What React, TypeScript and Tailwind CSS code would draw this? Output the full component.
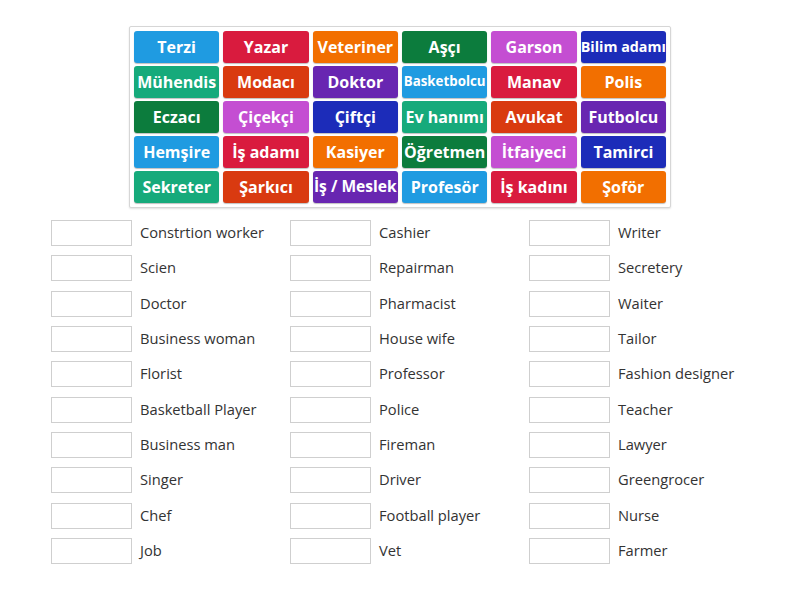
import React from "react";

type Tile = { label: string; color: string; size?: string };

const COLORS = [
  "bg-[#1f9be1]",
  "bg-[#d91b3e]",
  "bg-[#f26f00]",
  "bg-[#0c7c3d]",
  "bg-[#c44ed2]",
  "bg-[#1c2cb9]",
  "bg-[#16aa7b]",
  "bg-[#d93a10]",
  "bg-[#6826b1]",
];

const LABELS: { label: string; size?: string }[] = [
  { label: "Terzi" },
  { label: "Yazar" },
  { label: "Veteriner" },
  { label: "Aşçı" },
  { label: "Garson" },
  { label: "Bilim adamı", size: "text-[14.3px]" },
  { label: "Mühendis" },
  { label: "Modacı" },
  { label: "Doktor" },
  { label: "Basketbolcu", size: "text-[13.3px]" },
  { label: "Manav" },
  { label: "Polis" },
  { label: "Eczacı" },
  { label: "Çiçekçi" },
  { label: "Çiftçi" },
  { label: "Ev hanımı" },
  { label: "Avukat" },
  { label: "Futbolcu" },
  { label: "Hemşire" },
  { label: "İş adamı" },
  { label: "Kasiyer" },
  { label: "Öğretmen" },
  { label: "İtfaiyeci" },
  { label: "Tamirci" },
  { label: "Sekreter" },
  { label: "Şarkıcı" },
  { label: "İş / Meslek", size: "text-[15.6px]" },
  { label: "Profesör" },
  { label: "İş kadını" },
  { label: "Şoför" },
];

const TILES: Tile[] = LABELS.map((t, i) => ({ ...t, color: COLORS[i % COLORS.length] }));

const COLUMNS: string[][] = [
  ["Constrtion worker", "Scien", "Doctor", "Business woman", "Florist", "Basketball Player", "Business man", "Singer", "Chef", "Job"],
  ["Cashier", "Repairman", "Pharmacist", "House wife", "Professor", "Police", "Fireman", "Driver", "Football player", "Vet"],
  ["Writer", "Secretery", "Waiter", "Tailor", "Fashion designer", "Teacher", "Lawyer", "Greengrocer", "Nurse", "Farmer"],
];

export default function App() {
  return (
    <div
      className="w-[800px] h-[600px] bg-white overflow-hidden"
      style={{ fontFamily: '"Open Sans", "Noto Sans", sans-serif' }}
    >
      {/* Tile bank */}
      <div className="pt-[26px] flex justify-center">
        <div className="w-[542px] rounded-[2px] border border-[#d6d6d6] bg-white p-[4px] shadow-[0_1px_2px_rgba(0,0,0,0.12)]">
          <div className="grid grid-cols-6 gap-x-[4px] gap-y-[3px]">
            {TILES.map((t) => (
              <div
                key={t.label}
                className={`${t.color} h-[32px] rounded-[3px] flex items-center justify-center text-white font-bold whitespace-nowrap leading-none shadow-[0_1px_1px_rgba(0,0,0,0.25)] ${t.size ?? "text-[16px]"}`}
              >
                {t.label}
              </div>
            ))}
          </div>
        </div>
      </div>

      {/* Answer slots */}
      <div className="mt-[12px] pl-[51px] flex">
        {COLUMNS.map((col, ci) => (
          <div key={ci} className="w-[239px] flex flex-col gap-[9.33px]">
            {col.map((label) => (
              <div key={label} className="flex items-center h-[26px]">
                <div className="w-[81px] h-[26px] border border-[#cfcfcf] bg-white shrink-0" />
                <span className="ml-[8px] -mt-[2px] text-[14.7px] text-[#333333] whitespace-nowrap">{label}</span>
              </div>
            ))}
          </div>
        ))}
      </div>
    </div>
  );
}
